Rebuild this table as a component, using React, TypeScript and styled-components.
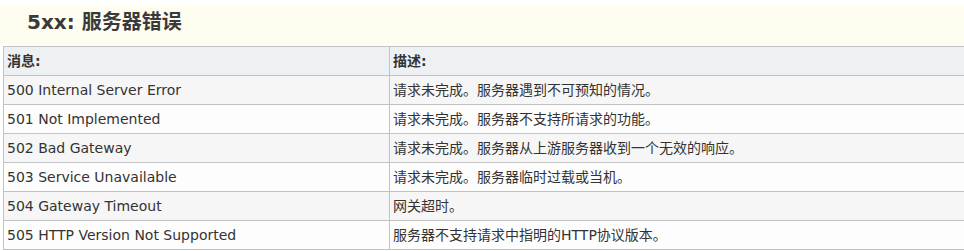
import React from 'react';
import styled, { createGlobalStyle } from 'styled-components';

const GlobalStyle = createGlobalStyle`
  body {
    margin: 0;
    background: #ffffff;
    overflow: hidden;
    font-family: 'DejaVu Sans', Verdana, 'Noto Sans CJK SC', sans-serif;
    color: #333333;
  }
`;

const Page = styled.div`
  padding-top: 5px;
  width: 1010px;
`;

const Heading = styled.h2`
  margin: 0;
  height: 41px;
  box-sizing: border-box;
  padding: 2px 0 0 27px;
  background-color: #fffdf0;
  font-size: 20px;
  line-height: 30px;
  font-weight: bold;
  color: #3a3a3a;
`;

const Table = styled.table`
  margin-left: 3px;
  width: 1000px;
  border-collapse: collapse;
  table-layout: fixed;
  font-size: 14px;
`;

const Row = styled.tr<{ $odd?: boolean }>`
  background-color: ${(p) => (p.$odd ? '#f6f6f6' : '#fdfdfd')};
`;

const HeadRow = styled.tr`
  background-color: #eef1f4;
`;

const Th = styled.th`
  height: 28px;
  padding: 0 3px;
  border: 1px solid #c2c2c2;
  text-align: left;
  font-weight: bold;
  line-height: 28px;
`;

const Td = styled.td`
  height: 28px;
  padding: 0 3px;
  border: 1px solid #c2c2c2;
  line-height: 28px;
  white-space: nowrap;
`;

const rows = [
  ['500 Internal Server Error', '请求未完成。服务器遇到不可预知的情况。'],
  ['501 Not Implemented', '请求未完成。服务器不支持所请求的功能。'],
  ['502 Bad Gateway', '请求未完成。服务器从上游服务器收到一个无效的响应。'],
  ['503 Service Unavailable', '请求未完成。服务器临时过载或当机。'],
  ['504 Gateway Timeout', '网关超时。'],
  ['505 HTTP Version Not Supported', '服务器不支持请求中指明的HTTP协议版本。'],
];

function App() {
  return (
    <Page>
      <GlobalStyle />
      <Heading>5xx: 服务器错误</Heading>
      <Table>
        <colgroup>
          <col style={{ width: 386 }} />
          <col />
        </colgroup>
        <thead>
          <HeadRow>
            <Th>消息:</Th>
            <Th>描述:</Th>
          </HeadRow>
        </thead>
        <tbody>
          {rows.map((row, i) => (
            <Row key={i} $odd={i % 2 === 0}>
              <Td>{row[0]}</Td>
              <Td>{row[1]}</Td>
            </Row>
          ))}
        </tbody>
      </Table>
    </Page>
  );
}

export default App;
